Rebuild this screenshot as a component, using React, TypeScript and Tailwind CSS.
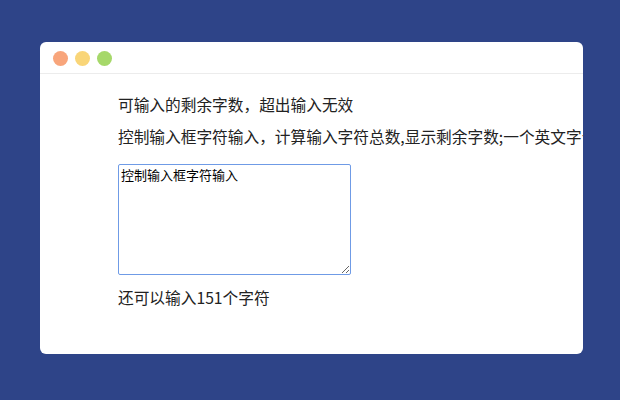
import React, { useState } from "react";

const MAX = 160;

export default function App() {
    const [value, setValue] = useState("控制输入框字符输入");
    const left = MAX - value.length;

    return (
        <div className="flex h-[400px] w-[620px] items-start bg-[#2e4488] pl-[40px] pt-[42px]" style={{ fontFamily: '"Noto Sans CJK SC", sans-serif' }}>
            <div className="flex h-[312px] w-[543px] flex-col overflow-hidden rounded-[6px] bg-white">
                <div className="flex h-[32px] items-center gap-[7px] border-b border-[#ececec] pl-[13px] pt-[2px]">
                    <span className="h-[15px] w-[15px] rounded-full bg-[#f8a57b]" />
                    <span className="h-[15px] w-[15px] rounded-full bg-[#f9d578]" />
                    <span className="h-[15px] w-[15px] rounded-full bg-[#a6d86a]" />
                </div>

                <div className="flex flex-col pl-[78px] pt-[20px] text-[#222]">
                    <p className="whitespace-nowrap text-[15.7px] leading-[22px]">可输入的剩余字数，超出输入无效</p>
                    <p className="mt-[10px] whitespace-nowrap text-[15.7px] leading-[22px]">
                        控制输入框字符输入，计算输入字符总数,显示剩余字数;一个英文字母算一个字符
                    </p>
                    <textarea
                        autoFocus
                        value={value}
                        onChange={(e) => setValue(e.target.value.slice(0, MAX))}
                        className="mt-[16px] h-[111px] w-[233px] resize rounded-[2px] border border-[#6f9be6] px-[2px] py-[1px] text-[13px] leading-[18px] text-black outline-none"
                    />
                    <p className="mt-[12px] text-[15.7px] leading-[22px]">还可以输入{left}个字符</p>
                </div>
            </div>
        </div>
    );
}
